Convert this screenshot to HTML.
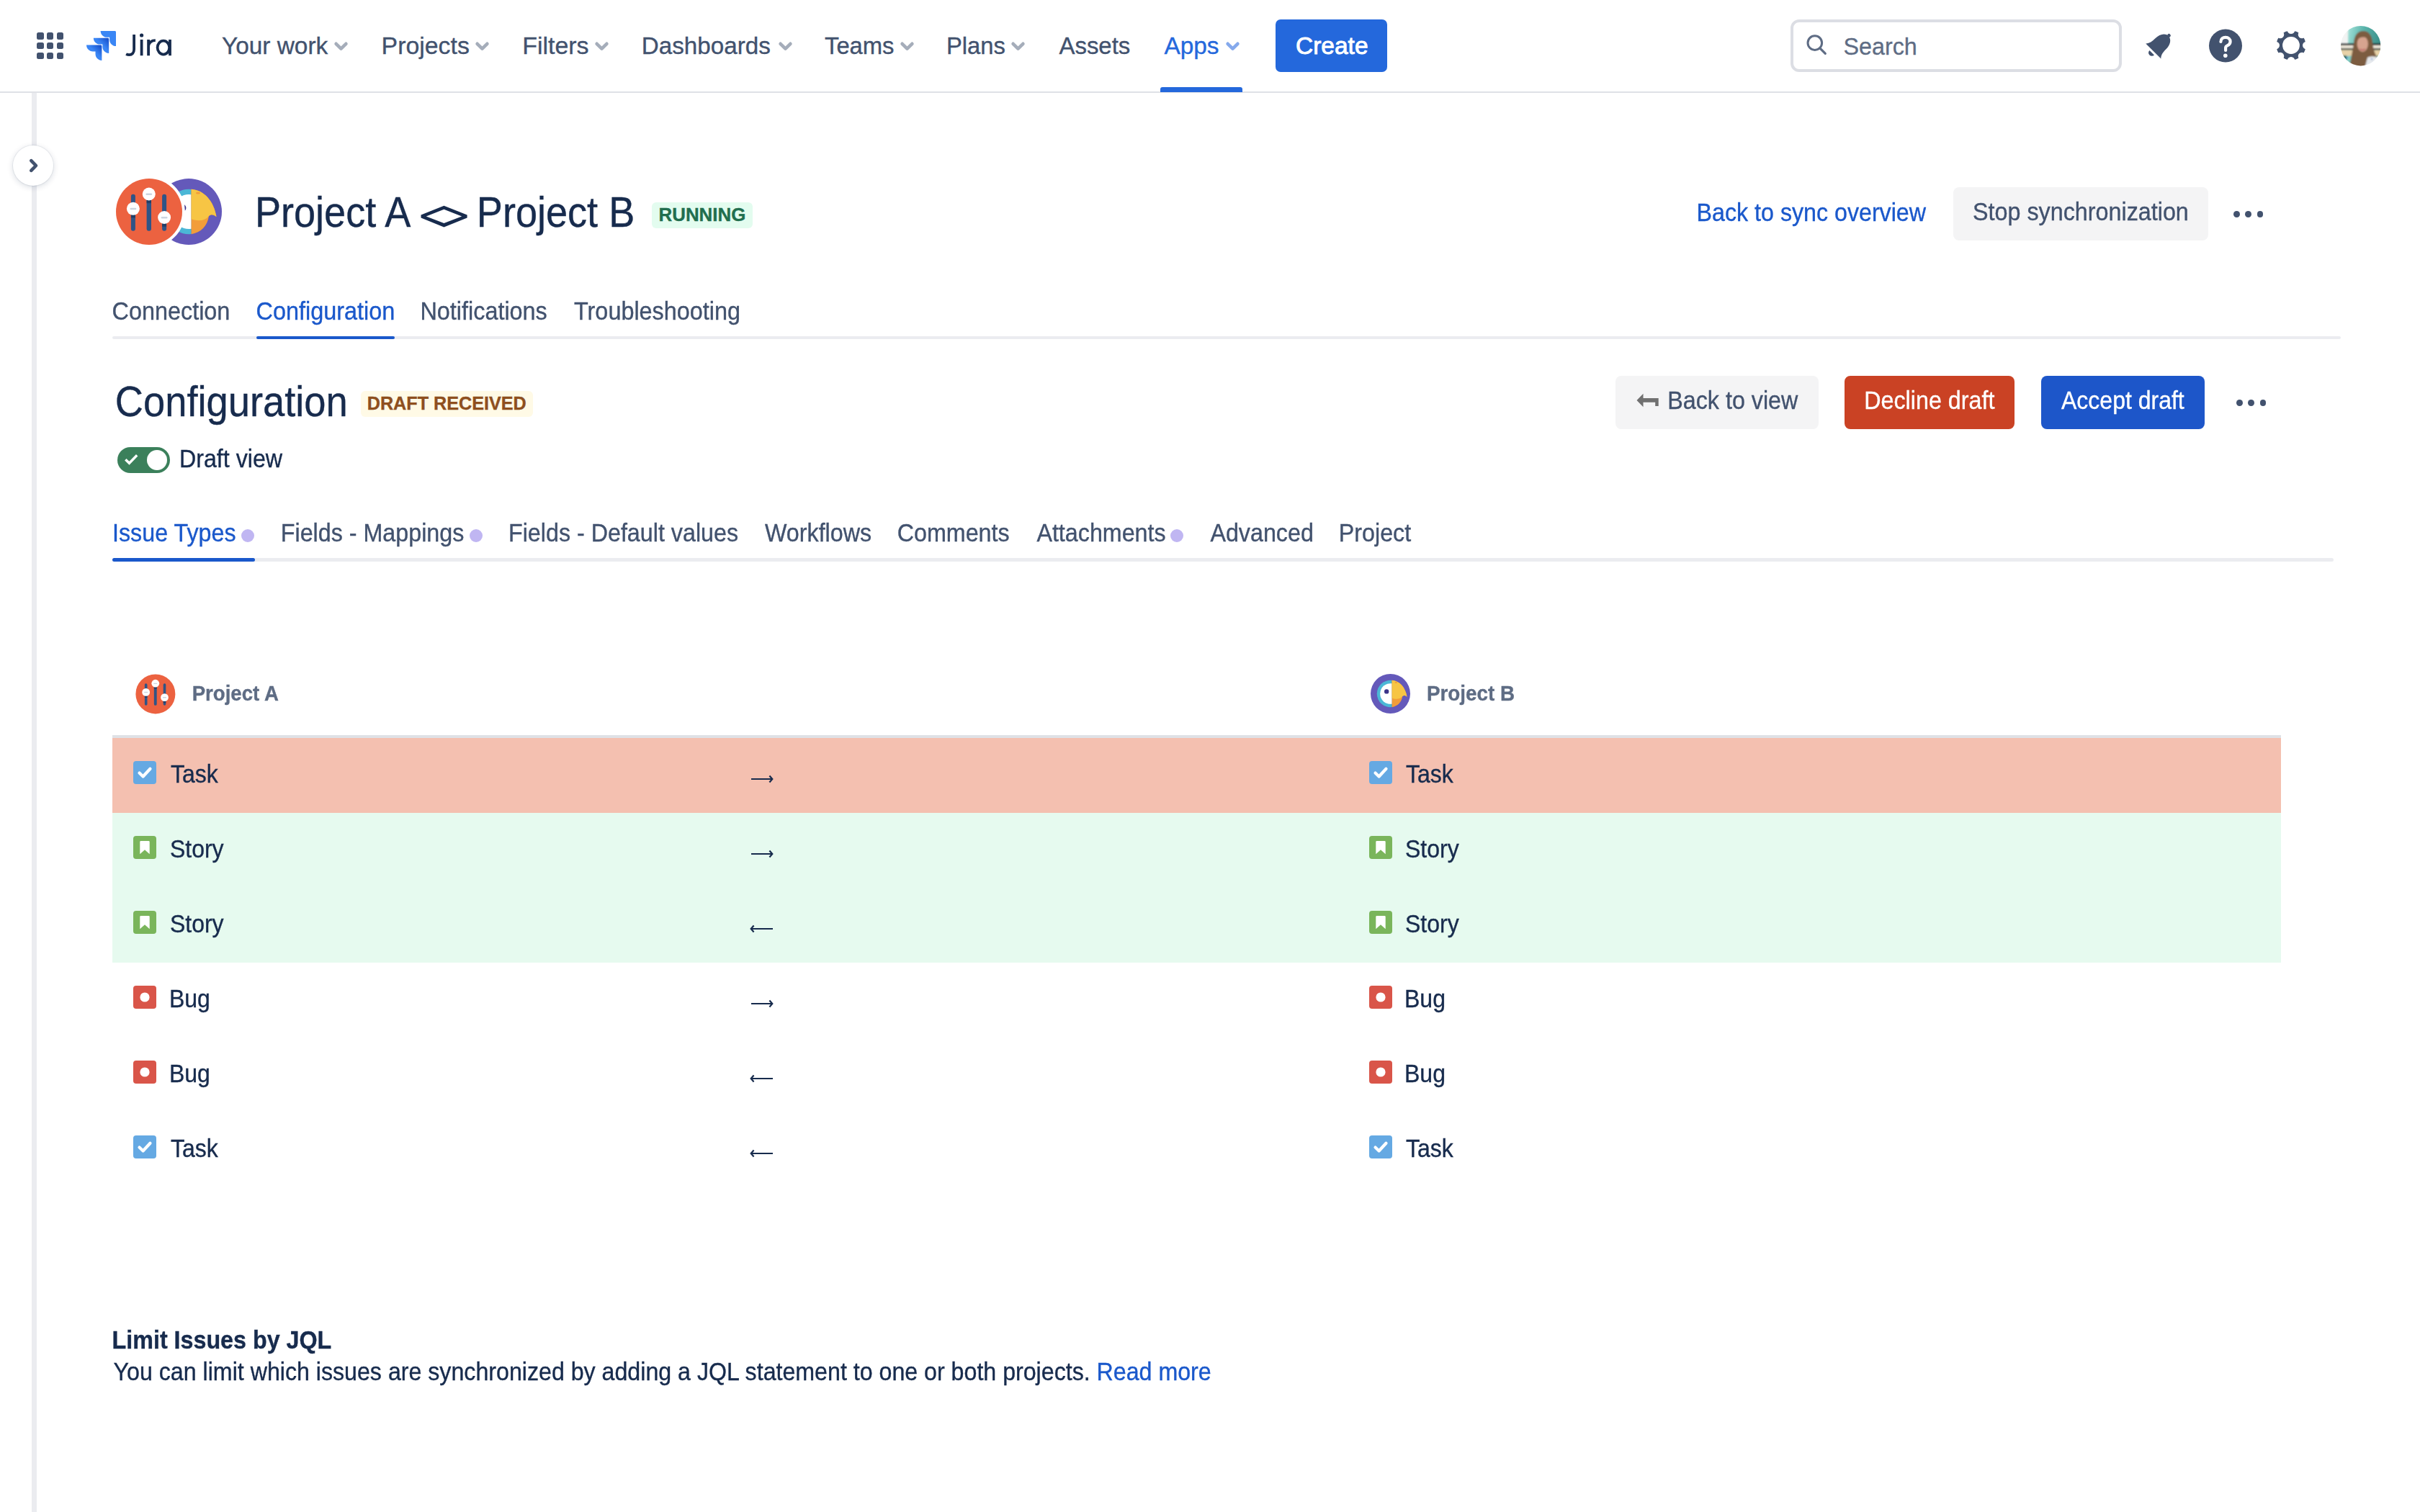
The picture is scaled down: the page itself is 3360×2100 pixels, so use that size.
<!DOCTYPE html><html><head><meta charset="utf-8"><style>
html,body{margin:0;padding:0;background:#fff;}
body{width:3360px;height:2100px;position:relative;overflow:hidden;font-family:"Liberation Sans",sans-serif;}
.t{position:absolute;white-space:nowrap;-webkit-text-stroke:0.35px currentColor;}
.b{position:absolute;}
svg{position:absolute;overflow:visible;}
</style></head><body>
<div class="b" style="left:0px;top:127px;width:3360px;height:2px;background:#DFE1E6;border-radius:0px;"></div>
<div class="b" style="left:51.0px;top:45.0px;width:9.600000000000001px;height:9.600000000000001px;background:#42526E;border-radius:2.5px;"></div>
<div class="b" style="left:51.0px;top:58.8px;width:9.600000000000001px;height:9.600000000000009px;background:#42526E;border-radius:2.5px;"></div>
<div class="b" style="left:51.0px;top:72.6px;width:9.600000000000001px;height:9.600000000000009px;background:#42526E;border-radius:2.5px;"></div>
<div class="b" style="left:64.8px;top:45.0px;width:9.600000000000009px;height:9.600000000000001px;background:#42526E;border-radius:2.5px;"></div>
<div class="b" style="left:64.8px;top:58.8px;width:9.600000000000009px;height:9.600000000000009px;background:#42526E;border-radius:2.5px;"></div>
<div class="b" style="left:64.8px;top:72.6px;width:9.600000000000009px;height:9.600000000000009px;background:#42526E;border-radius:2.5px;"></div>
<div class="b" style="left:78.6px;top:45.0px;width:9.600000000000009px;height:9.600000000000001px;background:#42526E;border-radius:2.5px;"></div>
<div class="b" style="left:78.6px;top:58.8px;width:9.600000000000009px;height:9.600000000000009px;background:#42526E;border-radius:2.5px;"></div>
<div class="b" style="left:78.6px;top:72.6px;width:9.600000000000009px;height:9.600000000000009px;background:#42526E;border-radius:2.5px;"></div>
<svg style="left:0;top:0" width="300" height="120" viewBox="0 0 300 120">
<defs>
<linearGradient id="jg1" x1="0.98" y1="0.02" x2="0.55" y2="0.45"><stop offset="0.18" stop-color="#1A55CF"/><stop offset="1" stop-color="#3A86F5"/></linearGradient>
</defs>
<g transform="translate(115.57 38.15) scale(1.583)">
<path fill="#3A86F5" d="M27.7 3H15.2c0 3.1 2.5 5.6 5.6 5.6h2.3v2.2c0 3.1 2.5 5.6 5.6 5.6V4c0-.6-.4-1-1-1z"/>
<path fill="url(#jg1)" d="M21.5 9.2H9c0 3.1 2.5 5.6 5.6 5.6h2.3V17c0 3.1 2.5 5.6 5.6 5.6V10.2c0-.6-.4-1-1-1z"/>
<path fill="url(#jg1)" d="M15.3 15.4H2.8c0 3.1 2.5 5.6 5.6 5.6h2.3v2.3c0 3.1 2.5 5.6 5.6 5.6V16.4c0-.6-.5-1-1-1z"/>
</g>
<g fill="none" stroke="#172B4D" stroke-width="3.8">
<path d="M186.1 47.9V68.5c0 5-2.8 7.6-6.6 7.6c-1.8 0-3.2-.4-4.4-1"/>
<path d="M196.6 55V77.2"/>
<path d="M206.1 77.2V55M206.1 63.5c1.2-5 4.5-7.3 9.7-7.3"/>
<ellipse cx="226.9" cy="66.1" rx="8.3" ry="9.5"/>
<path d="M236 55V77.2"/>
</g>
<circle cx="196.6" cy="49" r="2.6" fill="#172B4D"/>
</svg>
<div class="t" style="left:308.00px;top:47.30px;font-size:33.4px;line-height:33.4px;color:#42526E;-webkit-text-stroke:0.35px #42526E;">Your work</div>
<svg style="left:464px;top:58px" width="19" height="13" viewBox="0 0 19 13"><path d="M2.6 2.8L9.5 9.6L16.4 2.8" fill="none" stroke="#A5ADBA" stroke-width="4.6" stroke-linecap="round" stroke-linejoin="round"/></svg>
<div class="t" style="left:529.60px;top:47.30px;font-size:33.85px;line-height:33.85px;color:#42526E;-webkit-text-stroke:0.35px #42526E;">Projects</div>
<svg style="left:660px;top:58px" width="19" height="13" viewBox="0 0 19 13"><path d="M2.6 2.8L9.5 9.6L16.4 2.8" fill="none" stroke="#A5ADBA" stroke-width="4.6" stroke-linecap="round" stroke-linejoin="round"/></svg>
<div class="t" style="left:725.20px;top:47.30px;font-size:33.95px;line-height:33.95px;color:#42526E;-webkit-text-stroke:0.35px #42526E;">Filters</div>
<svg style="left:826px;top:58px" width="19" height="13" viewBox="0 0 19 13"><path d="M2.6 2.8L9.5 9.6L16.4 2.8" fill="none" stroke="#A5ADBA" stroke-width="4.6" stroke-linecap="round" stroke-linejoin="round"/></svg>
<div class="t" style="left:890.80px;top:47.30px;font-size:33.2px;line-height:33.2px;color:#42526E;-webkit-text-stroke:0.35px #42526E;">Dashboards</div>
<svg style="left:1080.5px;top:58px" width="19" height="13" viewBox="0 0 19 13"><path d="M2.6 2.8L9.5 9.6L16.4 2.8" fill="none" stroke="#A5ADBA" stroke-width="4.6" stroke-linecap="round" stroke-linejoin="round"/></svg>
<div class="t" style="left:1145.00px;top:48.30px;font-size:32.75px;line-height:32.75px;color:#42526E;-webkit-text-stroke:0.35px #42526E;">Teams</div>
<svg style="left:1250px;top:58px" width="19" height="13" viewBox="0 0 19 13"><path d="M2.6 2.8L9.5 9.6L16.4 2.8" fill="none" stroke="#A5ADBA" stroke-width="4.6" stroke-linecap="round" stroke-linejoin="round"/></svg>
<div class="t" style="left:1314.00px;top:48.30px;font-size:32.72px;line-height:32.72px;color:#42526E;-webkit-text-stroke:0.35px #42526E;">Plans</div>
<svg style="left:1404px;top:58px" width="19" height="13" viewBox="0 0 19 13"><path d="M2.6 2.8L9.5 9.6L16.4 2.8" fill="none" stroke="#A5ADBA" stroke-width="4.6" stroke-linecap="round" stroke-linejoin="round"/></svg>
<div class="t" style="left:1470.50px;top:48.30px;font-size:32.92px;line-height:32.92px;color:#42526E;-webkit-text-stroke:0.35px #42526E;">Assets</div>
<div class="t" style="left:1616.40px;top:47.30px;font-size:33.37px;line-height:33.37px;color:#2468DC;-webkit-text-stroke:0.35px #2468DC;">Apps</div>
<svg style="left:1702px;top:58px" width="19" height="13" viewBox="0 0 19 13"><path d="M2.6 2.8L9.5 9.6L16.4 2.8" fill="none" stroke="#85A9EC" stroke-width="4.6" stroke-linecap="round" stroke-linejoin="round"/></svg>
<div class="b" style="left:1611px;top:121px;width:114px;height:7px;background:#2468DC;border-radius:3px 3px 0 0px;"></div>
<div class="b" style="left:1771px;top:27px;width:155px;height:73px;background:#2468DC;border-radius:7px;"></div>
<div class="t" style="left:1799.00px;top:47.10px;font-size:33.5px;line-height:33.5px;color:#fff;-webkit-text-stroke:0.9px #fff;">Create</div>
<div class="b" style="left:2486px;top:27px;width:460px;height:73px;background:#fff;border-radius:12px;box-sizing:border-box;border:4px solid #DCDEE4;"></div>
<svg style="left:2500px;top:40px" width="44" height="44" viewBox="0 0 44 44"><circle cx="19.8" cy="19.6" r="9.8" fill="none" stroke="#5E6C84" stroke-width="3.0"/><path d="M26.8 26.8L34.3 34.3" stroke="#5E6C84" stroke-width="3.2" stroke-linecap="round"/></svg>
<div class="t" style="left:2559.50px;top:49.40px;font-size:32.3px;line-height:32.3px;color:#5E6C84;-webkit-text-stroke:0.3px #5E6C84;">Search</div>
<svg style="left:2960px;top:20px" width="80" height="80" viewBox="-40 -40 80 80">
<g transform="translate(0.4 0.4) rotate(45)">
<path fill="#42526E" d="M-15 15C-11.5 12-10.6 7-10.6 1C-10.6-8-6.5-14.3 0-14.8C6.5-14.3 10.6-8 10.6 1C10.6 7 11.5 12 15 15Z"/>
<circle cx="0" cy="-15.6" r="2.4" fill="#42526E"/>
<path fill="#42526E" d="M-4.6 18A4.6 4.6 0 0 0 4.6 18Z"/>
</g></svg>
<svg style="left:3060px;top:34px" width="60" height="60" viewBox="0 0 60 60">
<circle cx="30" cy="29.5" r="23" fill="#42526E"/>
<path d="M23.4 24c0-4 2.9-6.2 6.6-6.2c3.9 0 6.6 2.5 6.6 5.9c0 3.3-2.2 4.8-4.2 5.7c-1.5.7-2.3 1.5-2.3 3.2v3.4" fill="none" stroke="#fff" stroke-width="4.2" stroke-linecap="round"/>
<circle cx="29.8" cy="43.2" r="2.8" fill="#fff"/>
</svg>
<svg style="left:3150.8px;top:32.8px" width="60" height="60" viewBox="-30 -30 60 60">
<defs><mask id="gm" maskUnits="userSpaceOnUse" x="-30" y="-30" width="60" height="60"><rect x="-30" y="-30" width="60" height="60" fill="#000"/><circle r="20.5" fill="#fff"/><circle cx="0.00" cy="-21.30" r="5.3" fill="#000"/><circle cx="15.06" cy="-15.06" r="5.3" fill="#000"/><circle cx="21.30" cy="-0.00" r="5.3" fill="#000"/><circle cx="15.06" cy="15.06" r="5.3" fill="#000"/><circle cx="0.00" cy="21.30" r="5.3" fill="#000"/><circle cx="-15.06" cy="15.06" r="5.3" fill="#000"/><circle cx="-21.30" cy="0.00" r="5.3" fill="#000"/><circle cx="-15.06" cy="-15.06" r="5.3" fill="#000"/><circle r="11.9" fill="#000"/></mask></defs>
<rect x="-30" y="-30" width="60" height="60" fill="#42526E" mask="url(#gm)"/>
</svg>
<svg style="left:3249.7px;top:35.8px" width="55.4" height="55.4" viewBox="0 0 55.4 55.4">
<defs><clipPath id="avc"><circle cx="27.7" cy="27.7" r="27.7"/></clipPath>
<linearGradient id="avt" x1="0" y1="0" x2="1" y2="0.2"><stop offset="0.2" stop-color="#A6E3DA"/><stop offset="0.55" stop-color="#5BB5AC"/><stop offset="1" stop-color="#3A8E88"/></linearGradient>
<filter id="avb" x="-10%" y="-10%" width="120%" height="120%"><feGaussianBlur stdDeviation="0.9"/></filter></defs>
<g clip-path="url(#avc)"><g filter="url(#avb)">
<rect x="-2" y="-2" width="60" height="60" fill="url(#avt)"/>
<rect x="-2" y="-2" width="12" height="28" fill="#F2F4F3"/>
<rect x="-2" y="24" width="60" height="3" fill="#2C3438"/>
<rect x="-2" y="27" width="60" height="4" fill="#EDE6D8"/>
<rect x="-2" y="31" width="60" height="2.5" fill="#3A3A34"/>
<rect x="-2" y="33.5" width="60" height="8" fill="#E8D2A8"/>
<rect x="-2" y="41" width="10" height="8" fill="#2F6E66"/>
<path d="M33 56L34 42C38 40 46 39 52 44L58 58Z" fill="#E9ECEE"/>
<path d="M12 58C14 46 16 36 18 24C19 12 24 7 31 7C39 7 43 13 44 22C45 32 47 38 51 45C48 47 44 46 41 43L36 58Z" fill="#7C5B3F"/>
<ellipse cx="30.3" cy="25" rx="7.6" ry="11" fill="#D7A48F"/>
<path d="M21 20C23 12 27 10 32 11C37 12 39 16 39 20C36 15 30 14 24 18Z" fill="#7C5B3F"/>
<path d="M26.5 32Q30.3 35 34 32" stroke="#B5525A" stroke-width="1.3" fill="none"/>
<path d="M34 56L37 44C40 42 47 41 53 45L57 58Z" fill="#E6E9EC"/>
<circle cx="43" cy="46" r="1" fill="#4F7ECF"/><circle cx="46" cy="51" r="1" fill="#4F7ECF"/><circle cx="9" cy="44" r="1.2" fill="#4F7ECF"/>
</g></g></svg>
<div class="b" style="left:44px;top:129px;width:7px;height:1971px;background:#EBECF0;border-radius:0px;"></div>
<div class="b" style="left:18px;top:202px;width:56px;height:56px;border-radius:50%;background:#fff;box-shadow:0 0 0 1px rgba(9,30,66,0.06),0 2px 8px rgba(9,30,66,0.16);"></div>
<svg style="left:30px;top:214px" width="32" height="32" viewBox="0 0 32 32"><path d="M13.3 9.2L20 16L13.3 22.8" fill="none" stroke="#42526E" stroke-width="4.6" stroke-linecap="round" stroke-linejoin="round"/></svg>
<svg style="left:216.0px;top:248.0px" width="92.0" height="92.0" viewBox="-46 -46 92 92">
<circle r="46" fill="#6459BA"/>
<path d="M3.6 -31.09A31.3 31.3 0 1 0 3.6 31.09Z" fill="#4BB7D6"/>
<path d="M3.6 -23.73A24 24 0 1 0 3.6 23.73Z" fill="#fff"/>
<path d="M3.6 -31.3C22 -30 35 -14 38.5 7C35 4 31 3 28 6C26 20 17 29 3.6 31.3Z" fill="#F29D3A"/>
<path d="M3.6 -31.3C22 -30 35 -14 38.5 7C35 4 31 3 28 6C22 14 10 13 3.6 10Z" fill="#F7C544"/>
<ellipse cx="13" cy="-26" rx="3" ry="1.6" fill="#F29D3A"/>
<circle cx="-8.9" cy="-5.2" r="5.3" fill="#3C3489"/>
</svg>
<svg style="left:157.0px;top:244.0px" width="100.0" height="100.0" viewBox="-50 -50 100 100">
<circle r="50" fill="#fff"/>
<circle r="46" fill="#EC6240"/>
<rect x="-25.1" y="-24.3" width="6" height="51" rx="3" fill="#2F5486"/>
<rect x="-3.4" y="-20" width="6.4" height="46.7" rx="3.2" fill="#2F5486"/>
<rect x="18.1" y="-24.3" width="6" height="51" rx="3" fill="#2F5486"/>
<rect x="-25.1" y="4.2" width="6" height="4.3" fill="#233F66"/>
<rect x="-3.4" y="-16.1" width="6.4" height="4.3" fill="#233F66"/>
<rect x="18.1" y="16.4" width="6" height="4.3" fill="#233F66"/>
<circle cx="-22.1" cy="-4.2" r="9" fill="#fff"/>
<circle cx="-0.2" cy="-24.5" r="9" fill="#fff"/>
<circle cx="21.1" cy="8" r="9" fill="#fff"/>
<rect x="-26.5" y="-5.2" width="8.8" height="2.4" rx="1.2" fill="#CDD5E0"/>
<rect x="-4.6" y="-25.5" width="8.8" height="2.4" rx="1.2" fill="#CDD5E0"/>
<rect x="16.7" y="7" width="8.8" height="2.4" rx="1.2" fill="#CDD5E0"/>
</svg>
<div class="t" style="left:353.90px;top:269.00px;font-size:54.1px;line-height:54.1px;color:#172B4D;transform:scaleY(1.085);transform-origin:0 46.00px;">Project A</div>
<svg style="left:570px;top:270px" width="100" height="60" viewBox="570 270 100 60"><path fill="#172B4D" fill-rule="evenodd" d="M584.5 298.4L616.4 285.7L648.6 298.4V302.6L616.4 315.4L584.5 302.6Z M591.7 300.5L616.4 310.1L641.2 300.5L616.4 290.8Z"/></svg>
<div class="t" style="left:661.80px;top:269.00px;font-size:54.1px;line-height:54.1px;color:#172B4D;transform:scaleY(1.085);transform-origin:0 46.00px;">Project B</div>
<div class="b" style="left:905px;top:281px;width:140px;height:36px;background:#E3FCEF;border-radius:6px;"></div>
<div class="t" style="left:914.50px;top:286.00px;font-size:25.9px;line-height:25.9px;color:#216E4E;font-weight:700;">RUNNING</div>
<div class="t" style="left:2355.60px;top:280.00px;font-size:32.2px;line-height:32.2px;color:#1A58CB;transform:scaleY(1.075);transform-origin:0 27.00px;">Back to sync overview</div>
<div class="b" style="left:2712px;top:260px;width:354px;height:74px;background:#F4F4F5;border-radius:8px;"></div>
<div class="t" style="left:2739.00px;top:279.30px;font-size:32.3px;line-height:32.3px;color:#42526E;transform:scaleY(1.075);transform-origin:0 27.00px;">Stop synchronization</div>
<div class="b" style="left:3100.9px;top:292.8px;width:8.8px;height:8.8px;border-radius:50%;background:#42526E"></div><div class="b" style="left:3117.3px;top:292.8px;width:8.8px;height:8.8px;border-radius:50%;background:#42526E"></div><div class="b" style="left:3133.7px;top:292.8px;width:8.8px;height:8.8px;border-radius:50%;background:#42526E"></div>
<div class="t" style="left:155.50px;top:417.20px;font-size:32.4px;line-height:32.4px;color:#42526E;transform:scaleY(1.075);transform-origin:0 27.00px;">Connection</div>
<div class="t" style="left:355.60px;top:417.20px;font-size:32.4px;line-height:32.4px;color:#1A58CB;transform:scaleY(1.075);transform-origin:0 27.00px;">Configuration</div>
<div class="t" style="left:583.40px;top:417.20px;font-size:32.4px;line-height:32.4px;color:#42526E;transform:scaleY(1.075);transform-origin:0 27.00px;">Notifications</div>
<div class="t" style="left:797.00px;top:417.20px;font-size:32.4px;line-height:32.4px;color:#42526E;transform:scaleY(1.075);transform-origin:0 27.00px;">Troubleshooting</div>
<div class="b" style="left:156px;top:467px;width:3094px;height:4px;background:#EBECF0;border-radius:2px;"></div>
<div class="b" style="left:356px;top:467px;width:192px;height:4px;background:#1A58CB;border-radius:2px;"></div>
<div class="t" style="left:159.80px;top:533.00px;font-size:54.3px;line-height:54.3px;color:#172B4D;transform:scaleY(1.085);transform-origin:0 45.00px;">Configuration</div>
<div class="b" style="left:501px;top:543px;width:239px;height:36px;background:#FFFAE6;border-radius:6px;"></div>
<div class="t" style="left:509.70px;top:548.00px;font-size:25.2px;line-height:25.2px;color:#8E4F1E;font-weight:700;">DRAFT RECEIVED</div>
<div class="b" style="left:163px;top:621px;width:73px;height:36px;background:#3B805B;border-radius:18px;"></div>
<div class="b" style="left:203.8px;top:624.8px;width:28.5px;height:28.5px;border-radius:50%;background:#fff"></div>
<svg style="left:160px;top:620px" width="40" height="40" viewBox="0 0 40 40"><path d="M14.3 18.2L19.5 23.3L30.2 12.3" fill="none" stroke="#fff" stroke-width="3.4"/></svg>
<div class="t" style="left:249.00px;top:622.00px;font-size:32.2px;line-height:32.2px;color:#172B4D;transform:scaleY(1.075);transform-origin:0 27.00px;">Draft view</div>
<div class="b" style="left:2243px;top:522px;width:282px;height:74px;background:#F4F4F5;border-radius:8px;"></div>
<svg style="left:2270px;top:544px" width="36" height="24" viewBox="0 0 36 24"><path d="M2.5 12L11.5 2.8V9H32.7V19.9H28.2V14.7H11.5V21.2Z" fill="#707070"/></svg>
<div class="t" style="left:2315.30px;top:541.20px;font-size:32.25px;line-height:32.25px;color:#42526E;transform:scaleY(1.075);transform-origin:0 27.00px;">Back to view</div>
<div class="b" style="left:2561px;top:522px;width:236px;height:74px;background:#CA4224;border-radius:8px;"></div>
<div class="t" style="left:2588.20px;top:540.60px;font-size:32.3px;line-height:32.3px;color:#fff;transform:scaleY(1.075);transform-origin:0 27.00px;">Decline draft</div>
<div class="b" style="left:2834px;top:522px;width:227px;height:74px;background:#1D56C9;border-radius:8px;"></div>
<div class="t" style="left:2862.00px;top:540.60px;font-size:32px;line-height:32px;color:#fff;transform:scaleY(1.075);transform-origin:0 27.00px;">Accept draft</div>
<div class="b" style="left:3104.8px;top:554.8px;width:8.8px;height:8.8px;border-radius:50%;background:#42526E"></div><div class="b" style="left:3121.2px;top:554.8px;width:8.8px;height:8.8px;border-radius:50%;background:#42526E"></div><div class="b" style="left:3137.6px;top:554.8px;width:8.8px;height:8.8px;border-radius:50%;background:#42526E"></div>
<div class="t" style="left:156.00px;top:725.40px;font-size:32.25px;line-height:32.25px;color:#1A58CB;transform:scaleY(1.075);transform-origin:0 27.00px;">Issue Types</div>
<div class="t" style="left:389.80px;top:725.40px;font-size:32.25px;line-height:32.25px;color:#42526E;transform:scaleY(1.075);transform-origin:0 27.00px;">Fields - Mappings</div>
<div class="t" style="left:706.00px;top:725.40px;font-size:32.25px;line-height:32.25px;color:#42526E;transform:scaleY(1.075);transform-origin:0 27.00px;">Fields - Default values</div>
<div class="t" style="left:1062.00px;top:725.40px;font-size:32.25px;line-height:32.25px;color:#42526E;transform:scaleY(1.075);transform-origin:0 27.00px;">Workflows</div>
<div class="t" style="left:1245.70px;top:725.40px;font-size:32.25px;line-height:32.25px;color:#42526E;transform:scaleY(1.075);transform-origin:0 27.00px;">Comments</div>
<div class="t" style="left:1439.40px;top:725.40px;font-size:32.25px;line-height:32.25px;color:#42526E;transform:scaleY(1.075);transform-origin:0 27.00px;">Attachments</div>
<div class="t" style="left:1680.40px;top:725.40px;font-size:32.25px;line-height:32.25px;color:#42526E;transform:scaleY(1.075);transform-origin:0 27.00px;">Advanced</div>
<div class="t" style="left:1858.80px;top:725.40px;font-size:32.25px;line-height:32.25px;color:#42526E;transform:scaleY(1.075);transform-origin:0 27.00px;">Project</div>
<div class="b" style="left:335px;top:734.6px;width:18px;height:18px;border-radius:50%;background:#C0B6F2"></div>
<div class="b" style="left:651.5px;top:734.6px;width:18px;height:18px;border-radius:50%;background:#C0B6F2"></div>
<div class="b" style="left:1624.8px;top:734.6px;width:18px;height:18px;border-radius:50%;background:#C0B6F2"></div>
<div class="b" style="left:156px;top:775px;width:3084px;height:5px;background:#EBECF0;border-radius:2.5px;"></div>
<div class="b" style="left:156px;top:775px;width:198px;height:5px;background:#1A58CB;border-radius:2.5px;"></div>
<svg style="left:185.6086956521739px;top:933.6086956521739px" width="59.78260869565217" height="59.78260869565217" viewBox="-50 -50 100 100">

<circle r="46" fill="#EC6240"/>
<rect x="-25.1" y="-24.3" width="6" height="51" rx="3" fill="#2F5486"/>
<rect x="-3.4" y="-20" width="6.4" height="46.7" rx="3.2" fill="#2F5486"/>
<rect x="18.1" y="-24.3" width="6" height="51" rx="3" fill="#2F5486"/>
<rect x="-25.1" y="4.2" width="6" height="4.3" fill="#233F66"/>
<rect x="-3.4" y="-16.1" width="6.4" height="4.3" fill="#233F66"/>
<rect x="18.1" y="16.4" width="6" height="4.3" fill="#233F66"/>
<circle cx="-22.1" cy="-4.2" r="9" fill="#fff"/>
<circle cx="-0.2" cy="-24.5" r="9" fill="#fff"/>
<circle cx="21.1" cy="8" r="9" fill="#fff"/>
<rect x="-26.5" y="-5.2" width="8.8" height="2.4" rx="1.2" fill="#CDD5E0"/>
<rect x="-4.6" y="-25.5" width="8.8" height="2.4" rx="1.2" fill="#CDD5E0"/>
<rect x="16.7" y="7" width="8.8" height="2.4" rx="1.2" fill="#CDD5E0"/>
</svg>
<div class="t" style="left:266.70px;top:950.00px;font-size:27.6px;line-height:27.6px;color:#5E6C84;font-weight:700;transform:scaleY(1.075);transform-origin:0 23.00px;">Project A</div>
<svg style="left:1903.0px;top:935.9px" width="55.0" height="55.0" viewBox="-46 -46 92 92">
<circle r="46" fill="#6459BA"/>
<path d="M3.6 -31.09A31.3 31.3 0 1 0 3.6 31.09Z" fill="#4BB7D6"/>
<path d="M3.6 -23.73A24 24 0 1 0 3.6 23.73Z" fill="#fff"/>
<path d="M3.6 -31.3C22 -30 35 -14 38.5 7C35 4 31 3 28 6C26 20 17 29 3.6 31.3Z" fill="#F29D3A"/>
<path d="M3.6 -31.3C22 -30 35 -14 38.5 7C35 4 31 3 28 6C22 14 10 13 3.6 10Z" fill="#F7C544"/>
<ellipse cx="13" cy="-26" rx="3" ry="1.6" fill="#F29D3A"/>
<circle cx="-8.9" cy="-5.2" r="5.3" fill="#3C3489"/>
</svg>
<div class="t" style="left:1981.00px;top:950.00px;font-size:27.8px;line-height:27.8px;color:#5E6C84;font-weight:700;transform:scaleY(1.075);transform-origin:0 23.00px;">Project B</div>
<div class="b" style="left:156px;top:1021px;width:3011px;height:4px;background:#DFE1E6;border-radius:0px;"></div>
<div class="b" style="left:156px;top:1025px;width:3011px;height:104px;background:#F4C0B0;border-radius:0px;"></div>
<svg style="left:185.4px;top:1057px" width="32" height="32" viewBox="0 0 32 32"><rect width="32" height="32" rx="4" fill="#65A9E3"/><path d="M8.5 16.6L13.6 21.5L23.5 10.8" fill="none" stroke="#fff" stroke-width="4.2" stroke-linecap="round" stroke-linejoin="round"/></svg>
<div class="t" style="left:236.90px;top:1060.00px;font-size:32px;line-height:32px;color:#172B4D;transform:scaleY(1.075);transform-origin:0 27.00px;">Task</div>
<svg style="left:1901px;top:1057px" width="32" height="32" viewBox="0 0 32 32"><rect width="32" height="32" rx="4" fill="#65A9E3"/><path d="M8.5 16.6L13.6 21.5L23.5 10.8" fill="none" stroke="#fff" stroke-width="4.2" stroke-linecap="round" stroke-linejoin="round"/></svg>
<div class="t" style="left:1952.00px;top:1060.00px;font-size:32px;line-height:32px;color:#172B4D;transform:scaleY(1.075);transform-origin:0 27.00px;">Task</div>
<svg style="left:1030px;top:1070px" width="60" height="24" viewBox="1030 1070 60 24"><path d="M1043 1082H1071M1068.4 1077.5L1072.3 1082L1068.4 1086.5" fill="none" stroke="#172B4D" stroke-width="2.2"/></svg>
<div class="b" style="left:156px;top:1129px;width:3011px;height:104px;background:#E6FAEF;border-radius:0px;"></div>
<svg style="left:185.4px;top:1161px" width="32" height="32" viewBox="0 0 32 32"><rect width="32" height="32" rx="4" fill="#7AB55B"/><path d="M9.3 8.3Q9.3 7 10.6 7H21.4Q22.7 7 22.7 8.3V25.2L16 19.2L9.3 25.2Z" fill="#fff"/></svg>
<div class="t" style="left:235.90px;top:1164.00px;font-size:32px;line-height:32px;color:#172B4D;transform:scaleY(1.075);transform-origin:0 27.00px;">Story</div>
<svg style="left:1901px;top:1161px" width="32" height="32" viewBox="0 0 32 32"><rect width="32" height="32" rx="4" fill="#7AB55B"/><path d="M9.3 8.3Q9.3 7 10.6 7H21.4Q22.7 7 22.7 8.3V25.2L16 19.2L9.3 25.2Z" fill="#fff"/></svg>
<div class="t" style="left:1951.00px;top:1164.00px;font-size:32px;line-height:32px;color:#172B4D;transform:scaleY(1.075);transform-origin:0 27.00px;">Story</div>
<svg style="left:1030px;top:1174px" width="60" height="24" viewBox="1030 1174 60 24"><path d="M1043 1186H1071M1068.4 1181.5L1072.3 1186L1068.4 1190.5" fill="none" stroke="#172B4D" stroke-width="2.2"/></svg>
<div class="b" style="left:156px;top:1233px;width:3011px;height:104px;background:#E6FAEF;border-radius:0px;"></div>
<svg style="left:185.4px;top:1265px" width="32" height="32" viewBox="0 0 32 32"><rect width="32" height="32" rx="4" fill="#7AB55B"/><path d="M9.3 8.3Q9.3 7 10.6 7H21.4Q22.7 7 22.7 8.3V25.2L16 19.2L9.3 25.2Z" fill="#fff"/></svg>
<div class="t" style="left:235.90px;top:1268.00px;font-size:32px;line-height:32px;color:#172B4D;transform:scaleY(1.075);transform-origin:0 27.00px;">Story</div>
<svg style="left:1901px;top:1265px" width="32" height="32" viewBox="0 0 32 32"><rect width="32" height="32" rx="4" fill="#7AB55B"/><path d="M9.3 8.3Q9.3 7 10.6 7H21.4Q22.7 7 22.7 8.3V25.2L16 19.2L9.3 25.2Z" fill="#fff"/></svg>
<div class="t" style="left:1951.00px;top:1268.00px;font-size:32px;line-height:32px;color:#172B4D;transform:scaleY(1.075);transform-origin:0 27.00px;">Story</div>
<svg style="left:1030px;top:1278px" width="60" height="24" viewBox="1030 1278 60 24"><path d="M1073 1290H1043.5M1046.6 1285.5L1042.7 1290L1046.6 1294.5" fill="none" stroke="#172B4D" stroke-width="2.2"/></svg>
<svg style="left:185.4px;top:1369px" width="32" height="32" viewBox="0 0 32 32"><rect width="32" height="32" rx="4" fill="#D95549"/><circle cx="16" cy="16" r="6.6" fill="#fff"/></svg>
<div class="t" style="left:234.90px;top:1372.00px;font-size:32px;line-height:32px;color:#172B4D;transform:scaleY(1.075);transform-origin:0 27.00px;">Bug</div>
<svg style="left:1901px;top:1369px" width="32" height="32" viewBox="0 0 32 32"><rect width="32" height="32" rx="4" fill="#D95549"/><circle cx="16" cy="16" r="6.6" fill="#fff"/></svg>
<div class="t" style="left:1950.00px;top:1372.00px;font-size:32px;line-height:32px;color:#172B4D;transform:scaleY(1.075);transform-origin:0 27.00px;">Bug</div>
<svg style="left:1030px;top:1382px" width="60" height="24" viewBox="1030 1382 60 24"><path d="M1043 1394H1071M1068.4 1389.5L1072.3 1394L1068.4 1398.5" fill="none" stroke="#172B4D" stroke-width="2.2"/></svg>
<svg style="left:185.4px;top:1473px" width="32" height="32" viewBox="0 0 32 32"><rect width="32" height="32" rx="4" fill="#D95549"/><circle cx="16" cy="16" r="6.6" fill="#fff"/></svg>
<div class="t" style="left:234.90px;top:1476.00px;font-size:32px;line-height:32px;color:#172B4D;transform:scaleY(1.075);transform-origin:0 27.00px;">Bug</div>
<svg style="left:1901px;top:1473px" width="32" height="32" viewBox="0 0 32 32"><rect width="32" height="32" rx="4" fill="#D95549"/><circle cx="16" cy="16" r="6.6" fill="#fff"/></svg>
<div class="t" style="left:1950.00px;top:1476.00px;font-size:32px;line-height:32px;color:#172B4D;transform:scaleY(1.075);transform-origin:0 27.00px;">Bug</div>
<svg style="left:1030px;top:1486px" width="60" height="24" viewBox="1030 1486 60 24"><path d="M1073 1498H1043.5M1046.6 1493.5L1042.7 1498L1046.6 1502.5" fill="none" stroke="#172B4D" stroke-width="2.2"/></svg>
<svg style="left:185.4px;top:1577px" width="32" height="32" viewBox="0 0 32 32"><rect width="32" height="32" rx="4" fill="#65A9E3"/><path d="M8.5 16.6L13.6 21.5L23.5 10.8" fill="none" stroke="#fff" stroke-width="4.2" stroke-linecap="round" stroke-linejoin="round"/></svg>
<div class="t" style="left:236.90px;top:1580.00px;font-size:32px;line-height:32px;color:#172B4D;transform:scaleY(1.075);transform-origin:0 27.00px;">Task</div>
<svg style="left:1901px;top:1577px" width="32" height="32" viewBox="0 0 32 32"><rect width="32" height="32" rx="4" fill="#65A9E3"/><path d="M8.5 16.6L13.6 21.5L23.5 10.8" fill="none" stroke="#fff" stroke-width="4.2" stroke-linecap="round" stroke-linejoin="round"/></svg>
<div class="t" style="left:1952.00px;top:1580.00px;font-size:32px;line-height:32px;color:#172B4D;transform:scaleY(1.075);transform-origin:0 27.00px;">Task</div>
<svg style="left:1030px;top:1590px" width="60" height="24" viewBox="1030 1590 60 24"><path d="M1073 1602H1043.5M1046.6 1597.5L1042.7 1602L1046.6 1606.5" fill="none" stroke="#172B4D" stroke-width="2.2"/></svg>
<div class="t" style="left:155.60px;top:1846.40px;font-size:32.26px;line-height:32.26px;color:#172B4D;font-weight:700;transform:scaleY(1.075);transform-origin:0 27.00px;">Limit Issues by JQL</div>
<div class="t" style="left:157.60px;top:1889.80px;font-size:32.17px;line-height:32.17px;color:#172B4D;transform:scaleY(1.075);transform-origin:0 27.00px;">You can limit which issues are synchronized by adding a JQL statement to one or both projects. <span style="color:#1A58CB">Read more</span></div>
</body></html>
